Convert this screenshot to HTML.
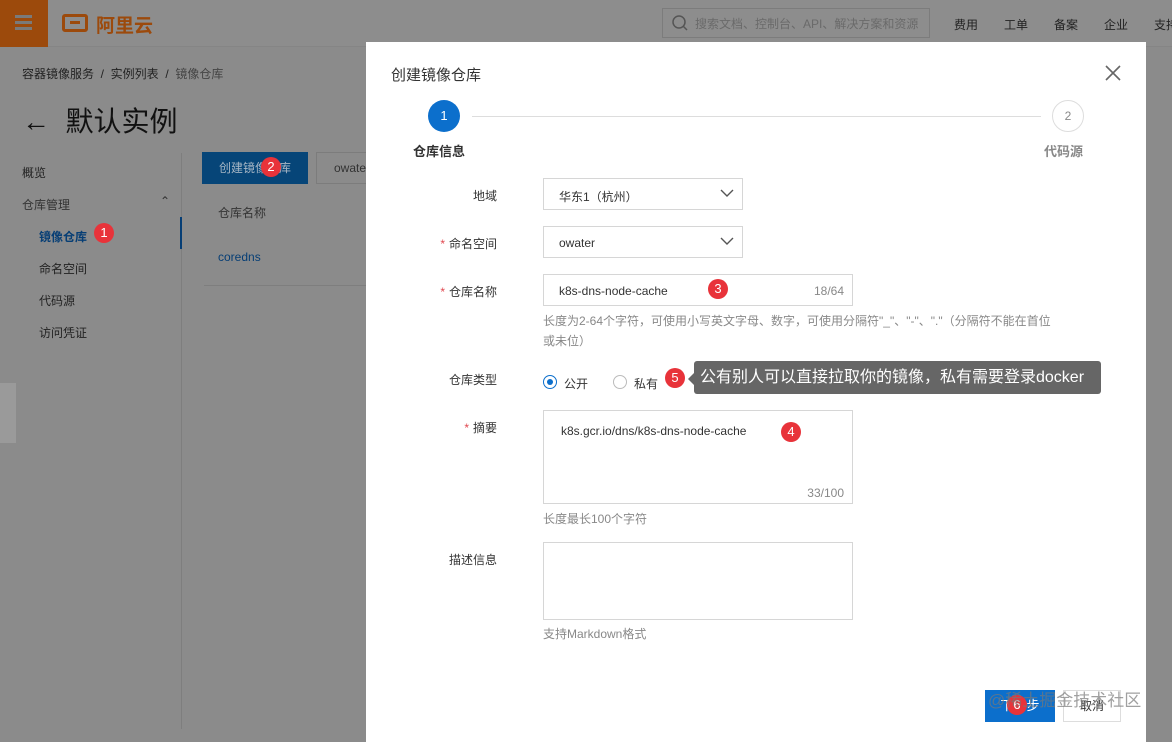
<!DOCTYPE html>
<html><head><meta charset="utf-8"><style>
*{box-sizing:border-box;margin:0;padding:0}
body{width:1172px;height:729px;overflow:hidden;background:#8b8b8b;font-family:"Liberation Sans","Noto Sans CJK SC",sans-serif;font-size:12px;color:#333;position:relative}
.a{position:absolute;white-space:nowrap}
.badge{position:absolute;width:20px;height:20px;border-radius:50%;background:#e8333a;color:#fff;font-size:13px;text-align:center;line-height:20px}
.lbl{position:absolute;width:130px;text-align:right;color:#333;font-size:12px}
.lbl i{color:#e0474f;font-style:normal;margin-right:4px}
.inp{position:absolute;border:1px solid #d6d6d6;background:#fff;font-size:12px;color:#333;white-space:nowrap}
.help{position:absolute;color:#888;font-size:12px;line-height:20px}
</style></head><body>
<div class="a" style="left:0;top:0;width:1172px;height:47px;background:#8d8d8d;border-bottom:1px solid #858585"></div>
<div class="a" style="left:0;top:0;width:48px;height:47px;background:#9c4a0c"></div>
<div class="a" style="left:15px;top:15px;width:17px;height:3px;background:#7a7a7a;box-shadow:0 6px 0 #7a7a7a,0 12px 0 #7a7a7a"></div>
<div class="a" style="left:62px;top:14px;width:26px;height:18px;border:3px solid #9c4a0c;border-radius:3px"></div>
<div class="a" style="left:70px;top:21px;width:10px;height:3px;background:#9c4a0c"></div>
<div class="a" style="left:96px;top:11px;font-size:19px;font-weight:bold;color:#9c4a0c">阿里云</div>
<div class="a" style="left:662px;top:8px;width:268px;height:30px;border:1px solid #7c7c7c"></div>
<svg class="a" style="left:671px;top:14px" width="18" height="18"><circle cx="8" cy="8" r="6" stroke="#555" stroke-width="1.5" fill="none"/><path d="M12.5 12.5l3.5 3.5" stroke="#555" stroke-width="1.5"/></svg>
<div class="a" style="left:695px;top:15px;color:#6a6a6a;font-size:12px">搜索文档、控制台、API、解决方案和资源</div>
<div class="a" style="left:954px;top:16px;color:#222">费用</div>
<div class="a" style="left:1004px;top:16px;color:#222">工单</div>
<div class="a" style="left:1054px;top:16px;color:#222">备案</div>
<div class="a" style="left:1104px;top:16px;color:#222">企业</div>
<div class="a" style="left:1154px;top:16px;color:#222">支持</div>
<div class="a" style="left:22px;top:65px;color:#222;font-size:12px">容器镜像服务 &nbsp;/&nbsp; 实例列表 &nbsp;/&nbsp; <span style="color:#444">镜像仓库</span></div>
<div class="a" style="left:22px;top:100px;font-size:28px;color:#111">←&nbsp; 默认实例</div>
<div class="a" style="left:22px;top:164px;color:#222">概览</div>
<div class="a" style="left:22px;top:196px;color:#333">仓库管理</div>
<div class="a" style="left:160px;top:194px;color:#333">⌃</div>
<div class="a" style="left:39px;top:228px;color:#063e75;font-weight:bold">镜像仓库</div>
<div class="a" style="left:39px;top:260px;color:#222">命名空间</div>
<div class="a" style="left:39px;top:292px;color:#222">代码源</div>
<div class="a" style="left:39px;top:324px;color:#222">访问凭证</div>
<div class="badge" style="left:94px;top:223px">1</div>
<div class="a" style="left:181px;top:153px;width:1px;height:576px;background:#7e7e7e"></div>
<div class="a" style="left:180px;top:217px;width:2px;height:32px;background:#063e75"></div>
<div class="a" style="left:0;top:383px;width:16px;height:60px;background:#9a9a9a"></div>
<div class="a" style="left:202px;top:152px;width:106px;height:32px;background:#064578;color:#a7b6c5;line-height:32px;padding-left:17px">创建镜像仓库</div>
<div class="badge" style="left:261px;top:157px">2</div>
<div class="a" style="left:316px;top:152px;width:60px;height:32px;border:1px solid #7c7c7c;line-height:30px;padding-left:17px;color:#333">owater</div>
<div class="a" style="left:218px;top:204px;color:#333">仓库名称</div>
<div class="a" style="left:218px;top:250px;color:#063e75">coredns</div>
<div class="a" style="left:204px;top:285px;width:170px;height:1px;background:#7e7e7e"></div>
<div class="a" style="left:366px;top:42px;width:780px;height:700px;background:#fff"></div>
<div class="a" style="left:391px;top:64px;font-size:15px;color:#333">创建镜像仓库</div>
<svg class="a" style="left:1105px;top:65px" width="16" height="16"><path d="M1 1l14 14M15 1L1 15" stroke="#666" stroke-width="1.6"/></svg>
<div class="a" style="left:428px;top:100px;width:32px;height:32px;border-radius:50%;background:#0c6fcc;color:#fff;text-align:center;line-height:32px;font-size:13px">1</div>
<div class="a" style="left:472px;top:116px;width:569px;height:1px;background:#ddd"></div>
<div class="a" style="left:1052px;top:100px;width:32px;height:32px;border-radius:50%;border:1px solid #ddd;color:#888;text-align:center;line-height:30px;font-size:12px">2</div>
<div class="a" style="left:413px;top:141px;font-size:13px;font-weight:bold;color:#333">仓库信息</div>
<div class="a" style="left:1044px;top:141px;font-size:13px;font-weight:bold;color:#888">代码源</div>
<div class="lbl" style="left:367px;top:187px">地域</div>
<div class="inp" style="left:543px;top:178px;width:200px;height:32px;padding:9px 15px">华东1（杭州）</div>
<svg class="a" style="left:720px;top:188px" width="14" height="10"><path d="M1 2l6 6 6-6" stroke="#555" stroke-width="1.4" fill="none"/></svg>
<div class="lbl" style="left:367px;top:235px"><i>*</i>命名空间</div>
<div class="inp" style="left:543px;top:226px;width:200px;height:32px;padding:9px 15px">owater</div>
<svg class="a" style="left:720px;top:236px" width="14" height="10"><path d="M1 2l6 6 6-6" stroke="#555" stroke-width="1.4" fill="none"/></svg>
<div class="lbl" style="left:367px;top:283px"><i>*</i>仓库名称</div>
<div class="inp" style="left:543px;top:274px;width:310px;height:32px;padding:9px 15px">k8s-dns-node-cache<span style="position:absolute;right:8px;top:9px;color:#888">18/64</span></div>
<div class="badge" style="left:708px;top:279px">3</div>
<div class="help" style="left:543px;top:311px;width:520px">长度为2-64个字符，可使用小写英文字母、数字，可使用分隔符"_"、"-"、"."（分隔符不能在首位<br>或未位）</div>
<div class="lbl" style="left:367px;top:371px">仓库类型</div>
<div class="a" style="left:543px;top:375px;width:14px;height:14px;border-radius:50%;border:1px solid #0c6fcc"></div>
<div class="a" style="left:547px;top:379px;width:6px;height:6px;border-radius:50%;background:#0c6fcc"></div>
<div class="a" style="left:564px;top:375px">公开</div>
<div class="a" style="left:613px;top:375px;width:14px;height:14px;border-radius:50%;border:1px solid #bbb"></div>
<div class="a" style="left:634px;top:375px">私有</div>
<div class="badge" style="left:665px;top:368px">5</div>
<div class="a" style="left:694px;top:361px;width:407px;height:33px;background:#666;border-radius:3px;color:#fff;font-size:16px;line-height:33px;padding-left:6px">公有别人可以直接拉取你的镜像，私有需要登录docker</div>
<div class="a" style="left:688px;top:373px;border:6px solid transparent;border-right-color:#666;border-left:0"></div>
<div class="lbl" style="left:367px;top:419px"><i>*</i>摘要</div>
<div class="inp" style="left:543px;top:410px;width:310px;height:94px;padding:13px 17px">k8s.gcr.io/dns/k8s-dns-node-cache<span style="position:absolute;right:8px;bottom:3px;color:#888">33/100</span></div>
<div class="badge" style="left:781px;top:422px">4</div>
<div class="help" style="left:543px;top:509px">长度最长100个字符</div>
<div class="lbl" style="left:367px;top:551px">描述信息</div>
<div class="inp" style="left:543px;top:542px;width:310px;height:78px"></div>
<div class="help" style="left:543px;top:624px">支持Markdown格式</div>
<div class="a" style="left:985px;top:690px;width:70px;height:32px;background:#0c6fcc;color:#fff;text-align:center;line-height:32px;font-size:13px">下一步</div>
<div class="badge" style="left:1007px;top:695px">6</div>
<div class="a" style="left:1063px;top:690px;width:58px;height:32px;border:1px solid #ddd;text-align:center;line-height:30px;color:#333">取消</div>
<div class="a" style="left:988px;top:686px;font-size:17px;color:rgba(120,120,120,.7)">@稀土掘金技术社区</div>
</body></html>
